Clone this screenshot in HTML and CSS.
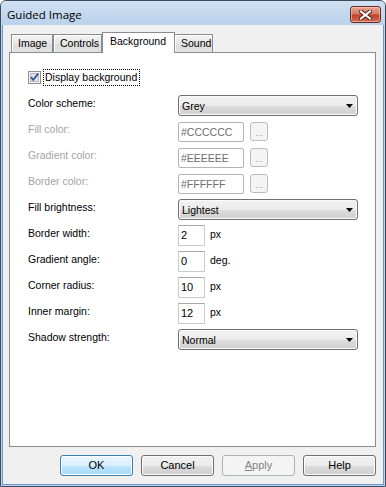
FILE: index.html
```html
<!DOCTYPE html>
<html lang="en">
<head>
    <meta charset="UTF-8">
    <title>Guided Image</title>
    <link rel="stylesheet" href="styles.css">
</head>
<body>
    <div class="window">
        <div class="titlebar">
            <span class="title">Guided Image</span>
            <button class="close">
                <svg width="13" height="10" viewBox="0 0 13 10">
                    <path d="M2 1.5 L11 8.5 M11 1.5 L2 8.5" stroke="#4a1a14" stroke-width="4" stroke-linecap="square"/>
                    <path d="M2 1.5 L11 8.5 M11 1.5 L2 8.5" stroke="#fff" stroke-width="2.2" stroke-linecap="square"/>
                </svg>
            </button>
        </div>

        <div class="client">
            <div class="tabs">
                <div class="tab t-image">Image</div>
                <div class="tab t-controls">Controls</div>
                <div class="tab active t-bg">Background</div>
                <div class="tab t-sound">Sound</div>
            </div>

            <div class="panel">
                <div class="check-row">
                    <span class="checkbox">
                        <svg width="13" height="13" viewBox="0 0 13 13">
                            <rect x="0.5" y="0.5" width="12" height="12" fill="#f4f4f4" stroke="#8f8f8f"/>
                            <rect x="2.5" y="2.5" width="8" height="8" fill="#dfe3ea" stroke="#b6bac2"/>
                            <path d="M3 6.2 L5.2 8.8 L10.2 2.6" fill="none" stroke="#3d5599" stroke-width="1.8"/>
                        </svg>
                    </span>
                    <span class="focus">Display background</span>
                </div>

                <div class="form">
                    <div class="label">Color scheme:</div>
                    <div class="cell"><div class="combo"><span>Grey</span><svg width="7" height="4"><path d="M0 0 H7 L3.5 4 Z"/></svg></div></div>

                    <div class="label dis">Fill color:</div>
                    <div class="cell"><div class="color-box">#CCCCCC</div><div class="dots">...</div></div>

                    <div class="label dis">Gradient color:</div>
                    <div class="cell"><div class="color-box">#EEEEEE</div><div class="dots">...</div></div>

                    <div class="label dis">Border color:</div>
                    <div class="cell"><div class="color-box">#FFFFFF</div><div class="dots">...</div></div>

                    <div class="label">Fill brightness:</div>
                    <div class="cell"><div class="combo"><span>Lightest</span><svg width="7" height="4"><path d="M0 0 H7 L3.5 4 Z"/></svg></div></div>

                    <div class="label">Border width:</div>
                    <div class="cell"><div class="num">2</div><span class="unit">px</span></div>

                    <div class="label">Gradient angle:</div>
                    <div class="cell"><div class="num">0</div><span class="unit">deg.</span></div>

                    <div class="label">Corner radius:</div>
                    <div class="cell"><div class="num">10</div><span class="unit">px</span></div>

                    <div class="label">Inner margin:</div>
                    <div class="cell"><div class="num">12</div><span class="unit">px</span></div>

                    <div class="label">Shadow strength:</div>
                    <div class="cell"><div class="combo"><span>Normal</span><svg width="7" height="4"><path d="M0 0 H7 L3.5 4 Z"/></svg></div></div>
                </div>
            </div>

            <div class="buttons">
                <div class="btn default">OK</div>
                <div class="btn">Cancel</div>
                <div class="btn disabled"><u>A</u>pply</div>
                <div class="btn">Help</div>
            </div>
        </div>
    </div>
</body>
</html>
```

FILE: styles.css
```css
body {
    margin: 0;
    background: #fff;
    font-family: "Liberation Sans", Arial, sans-serif;
    font-size: 10.5px;
    color: #000;
}

.window {
    width: 386px;
    height: 487px;
    box-sizing: border-box;
    border: 1px solid #3f4a5a;
    border-radius: 6px 6px 0 0;
    background: #c0d5ed;
    display: flex;
    flex-direction: column;
}

/* title bar */
.titlebar {
    height: 24px;
    flex: none;
    display: flex;
    justify-content: space-between;
    align-items: flex-start;
    padding: 0 4px 0 6px;
    background: linear-gradient(#cfe0f3, #bbd2eb);
    border-radius: 5px 5px 0 0;
}

.title {
    font-family: "Open Sans", "Noto Sans", sans-serif;
    font-size: 11.5px;
    line-height: 17px;
    margin-top: 5px;
}

.close {
    width: 31px;
    height: 17px;
    margin-top: 5px;
    padding: 0;
    border: 1px solid #6a2a22;
    border-radius: 3px;
    background: linear-gradient(#e8a892, #d27a63 45%, #c2412a 55%, #d46e55);
    box-shadow: inset 0 0 0 1px rgba(255, 220, 210, 0.5);
    display: flex;
    align-items: center;
    justify-content: center;
}

/* client area */
.client {
    flex: 1;
    margin: 0 1px 1px;
    border: 1px solid #6b97c9;
    border-top: none;
    background: #f0f0f0;
    padding: 7px 7px 8px 6px;
    display: flex;
    flex-direction: column;
}

.tabs {
    height: 20px;
    flex: none;
    display: flex;
    align-items: flex-end;
    padding-left: 2px;
}

.tab {
    box-sizing: border-box;
    height: 18px;
    border: 1px solid #898c95;
    border-bottom: none;
    background: linear-gradient(#f4f4f4, #e7e7e7 50%, #dcdcdc 51%, #e2e2e2);
    box-shadow: inset 1px 1px 0 #fff;
    line-height: 16px;
    padding-left: 6px;
}

.t-image { width: 42px; }
.t-controls { width: 49px; }
.t-sound { width: 39px; margin-left: -1px; }

.tab.active {
    width: 73px;
    height: 21px;
    margin-bottom: -1px;
    background: #fff;
    box-shadow: none;
    position: relative;
    line-height: 16px;
    padding-left: 7px;
    z-index: 1;
}

.panel {
    flex: 1;
    border: 1px solid #898c95;
    background: #fff;
    padding: 16px 18px 0;
}

.check-row {
    display: flex;
    align-items: center;
    height: 17px;
    margin-bottom: 9px;
}

.checkbox {
    width: 13px;
    height: 13px;
    margin-right: 2px;
    display: flex;
}

.focus {
    box-sizing: border-box;
    height: 17px;
    border: 1px dotted #000;
    padding: 0 2px 0 1px;
    line-height: 15px;
}

.form {
    display: grid;
    grid-template-columns: 150px 1fr;
    grid-auto-rows: 21px;
    row-gap: 5px;
}

.label {
    line-height: 17px;
}

.label.dis {
    color: #a3a3a3;
}

.cell {
    display: flex;
    align-items: center;
}

.combo {
    box-sizing: border-box;
    width: 180px;
    height: 21px;
    border: 1px solid #707070;
    border-radius: 3px;
    background: linear-gradient(#f2f2f2, #ebebeb 50%, #dddddd 51%, #cfcfcf);
    box-shadow: inset 0 0 0 1px #fbfbfb;
    display: flex;
    align-items: center;
    justify-content: space-between;
    padding: 0 4px 0 3px;
}

.color-box {
    box-sizing: border-box;
    width: 66px;
    height: 20px;
    border: 1px solid #b4b4b4;
    border-radius: 2px;
    padding-left: 2px;
    line-height: 18px;
    color: #6d6d6d;
}

.dots {
    box-sizing: border-box;
    width: 18px;
    height: 19px;
    margin-left: 6px;
    border: 1px solid #b9bdc0;
    border-radius: 3px;
    background: #f4f4f4;
    color: #9a9a9a;
    font-size: 9px;
    text-align: center;
    line-height: 21px;
}

.num {
    box-sizing: border-box;
    width: 27px;
    height: 21px;
    border: 1px solid #c8cbd0;
    border-top-color: #a6a9af;
    padding-left: 2px;
    line-height: 19px;
    font-size: 11px;
}

.unit {
    margin-left: 5px;
    margin-top: -3px;
}

/* bottom buttons */
.buttons {
    flex: none;
    display: flex;
    justify-content: flex-end;
    gap: 8px;
    margin-top: 8px;
}

.btn {
    box-sizing: border-box;
    width: 73px;
    height: 21px;
    border: 1px solid #707070;
    border-radius: 3px;
    background: linear-gradient(#f2f2f2, #ebebeb 50%, #dddddd 51%, #cfcfcf);
    box-shadow: inset 0 0 0 1px #fcfcfc;
    text-align: center;
    line-height: 19px;
    font-size: 11px;
}

.btn.default {
    border-color: #3c7fb1;
    background: linear-gradient(#eaf6fd, #d9f0fc 50%, #bee6fd 51%, #a7d9f5);
}

.btn.disabled {
    border-color: #adb2b5;
    background: #f4f4f4;
    box-shadow: none;
    color: #838383;
}
```
